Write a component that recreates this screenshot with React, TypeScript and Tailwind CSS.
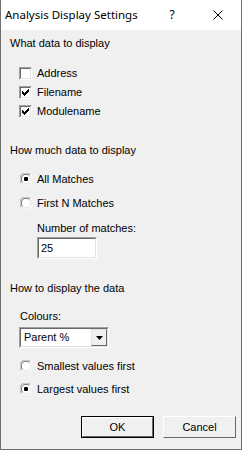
import React from 'react';

const body = { fontFamily: '"Liberation Sans", Arial, sans-serif' };

function Check({ checked }: { checked?: boolean }) {
  return (
    <div className="w-[13px] h-[13px] border border-t-[#a0a0a0] border-l-[#a0a0a0] border-r-white border-b-white shrink-0">
      <div className="w-full h-full border border-t-[#696969] border-l-[#696969] border-r-[#e3e3e3] border-b-[#e3e3e3] bg-white flex items-center justify-center">
        {checked && (
          <svg width="7" height="7" viewBox="0 0 7 7">
            <path d="M0 2h1v1h1v1h1v-1h1v-1h1v-1h1v-1h1v3h-1v1h-1v1h-1v1h-1v1h-1v-1h-1v-1h-1z" fill="#000" />
          </svg>
        )}
      </div>
    </div>
  );
}

function Radio({ on }: { on?: boolean }) {
  return (
    <svg width="12" height="12" viewBox="0 0 12 12" className="shrink-0">
      <circle cx="6" cy="6" r="5.5" fill="#fff" />
      <path d="M1.5 10.5 A5.5 5.5 0 0 1 10.5 1.5" stroke="#a0a0a0" strokeWidth="1" fill="none" />
      <path d="M10.5 1.5 A5.5 5.5 0 0 1 1.5 10.5" stroke="#ffffff" strokeWidth="1" fill="none" />
      <path d="M2.6 9.4 A4.5 4.5 0 0 1 9.4 2.6" stroke="#696969" strokeWidth="1" fill="none" />
      <path d="M9.4 2.6 A4.5 4.5 0 0 1 2.6 9.4" stroke="#e3e3e3" strokeWidth="1" fill="none" />
      {on && <rect x="4" y="4" width="4" height="4" rx="1" fill="#000" />}
    </svg>
  );
}

function Button({ label, def }: { label: string; def?: boolean }) {
  return (
    <div className={`w-[73px] h-[22px] ${def ? 'border border-black' : ''}`}>
      <div className="w-full h-full border border-t-white border-l-white border-r-[#696969] border-b-[#696969] bg-[#f0f0f0] flex items-center justify-center text-[11px] text-black">
        {label}
      </div>
    </div>
  );
}

export default function App() {
  return (
    <div className="w-[242px] h-[450px] flex flex-col border-x border-b border-[#707070] bg-[#f0f0f0]">
      {/* Title bar */}
      <div className="h-[30px] bg-white flex items-center shrink-0">
        <span className="pl-[4px] text-[11.5px] text-black flex-1" style={{ fontFamily: '"Noto Sans", "Open Sans", sans-serif' }}>
          Analysis Display Settings
        </span>
        <div className="w-[46px] h-full flex items-center justify-center text-[12px] text-black" style={{ fontFamily: '"Noto Sans", sans-serif' }}>
          ?
        </div>
        <div className="w-[46px] h-full flex items-center justify-center">
          <svg width="10" height="10" viewBox="0 0 10 10">
            <path d="M0.5 0.5 L9.5 9.5 M9.5 0.5 L0.5 9.5" stroke="#000" strokeWidth="1" />
          </svg>
        </div>
      </div>

      {/* Body */}
      <div className="flex flex-col text-[11px] text-black" style={body}>
        <div className="h-[14px] mt-[6px] pl-[9px] flex items-center">What data to display</div>

        <div className="mt-[14px] flex flex-col">
          <div className="h-[19px] pl-[18px] flex items-center gap-[5px]"><Check /><span>Address</span></div>
          <div className="h-[19px] pl-[18px] flex items-center gap-[5px]"><Check checked /><span>Filename</span></div>
          <div className="h-[19px] pl-[18px] flex items-center gap-[5px]"><Check checked /><span>Modulename</span></div>
        </div>

        <div className="h-[14px] mt-[22px] pl-[9px] flex items-center">How much data to display</div>

        <div className="h-[20px] mt-[12px] pl-[19px] flex items-center gap-[5px]"><Radio on /><span>All Matches</span></div>
        <div className="h-[20px] mt-[4px] pl-[19px] flex items-center gap-[5px]"><Radio /><span>First N Matches</span></div>

        <div className="h-[14px] mt-[8px] pl-[36px] flex items-center">Number of matches:</div>
        <div className="mt-[2px] pl-[36px]">
          <div className="w-[60px] h-[22px] border border-t-[#a0a0a0] border-l-[#a0a0a0] border-r-white border-b-white">
            <div className="w-full h-full border border-t-[#696969] border-l-[#696969] border-r-[#e3e3e3] border-b-[#e3e3e3] bg-white flex items-center pl-[2px]">
              25
            </div>
          </div>
        </div>

        <div className="h-[14px] mt-[22px] pl-[9px] flex items-center">How to display the data</div>

        <div className="h-[14px] mt-[14px] pl-[19px] flex items-center">Colours:</div>
        <div className="mt-[4px] pl-[18px]">
          <div className="w-[90px] h-[21px] border border-t-[#a0a0a0] border-l-[#a0a0a0] border-r-white border-b-white">
            <div className="w-full h-full border border-t-[#696969] border-l-[#696969] border-r-[#e3e3e3] border-b-[#e3e3e3] bg-white flex items-center">
              <span className="flex-1 pl-[3px]">Parent %</span>
              <div className="w-[16px] h-[17px] border border-t-[#e3e3e3] border-l-[#e3e3e3] border-r-[#696969] border-b-[#696969] bg-[#f0f0f0] flex items-center justify-center">
                <svg width="7" height="4" viewBox="0 0 7 4">
                  <path d="M0 0h7l-3.5 4z" fill="#000" />
                </svg>
              </div>
            </div>
          </div>
        </div>

        <div className="h-[20px] mt-[8px] pl-[19px] flex items-center gap-[5px]"><Radio /><span>Smallest values first</span></div>
        <div className="h-[20px] mt-[3px] pl-[19px] flex items-center gap-[5px]"><Radio on /><span>Largest values first</span></div>

        <div className="mt-[17px] flex justify-end gap-[9px] pr-[5px]">
          <Button label="OK" def />
          <Button label="Cancel" />
        </div>
      </div>
    </div>
  );
}
